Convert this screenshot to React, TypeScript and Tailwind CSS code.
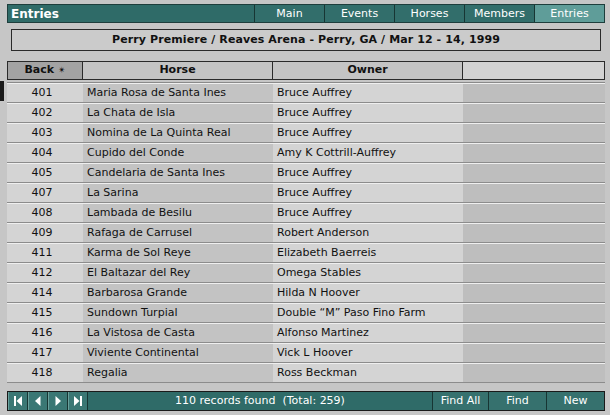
import React from 'react';

const rows: [string, string, string][] = [
  ['401', 'Maria Rosa de Santa Ines', 'Bruce Auffrey'],
  ['402', 'La Chata de Isla', 'Bruce Auffrey'],
  ['403', 'Nomina de La Quinta Real', 'Bruce Auffrey'],
  ['404', 'Cupido del Conde', 'Amy K Cottrill-Auffrey'],
  ['405', 'Candelaria de Santa Ines', 'Bruce Auffrey'],
  ['407', 'La Sarina', 'Bruce Auffrey'],
  ['408', 'Lambada de Besilu', 'Bruce Auffrey'],
  ['409', 'Rafaga de Carrusel', 'Robert Anderson'],
  ['411', 'Karma de Sol Reye', 'Elizabeth Baerreis'],
  ['412', 'El Baltazar del Rey', 'Omega Stables'],
  ['414', 'Barbarosa Grande', 'Hilda N Hoover'],
  ['415', 'Sundown Turpial', 'Double \u201CM\u201D Paso Fino Farm'],
  ['416', 'La Vistosa de Casta', 'Alfonso Martinez'],
  ['417', 'Viviente Continental', 'Vick L Hoover'],
  ['418', 'Regalia', 'Ross Beckman'],
];

const tabs = ['Main', 'Events', 'Horses', 'Members', 'Entries'];

const NavIcon = ({ kind }: { kind: 'first' | 'prev' | 'next' | 'last' }) => (
  <svg width="12" height="12" viewBox="0 0 12 12" fill="#fff">
    {kind === 'first' && (
      <>
        <rect x="2" y="1" width="2" height="10" />
        <polygon points="10,1 10,11 4.5,6" />
      </>
    )}
    {kind === 'prev' && <polygon points="8.5,1 8.5,11 3,6" />}
    {kind === 'next' && <polygon points="3.5,1 3.5,11 9,6" />}
    {kind === 'last' && (
      <>
        <polygon points="2,1 2,11 7.5,6" />
        <rect x="8" y="1" width="2" height="10" />
      </>
    )}
  </svg>
);

export default function App() {
  const font = { fontFamily: '"DejaVu Sans", Verdana, sans-serif' };
  return (
    <div
      className="w-[610px] h-[415px] bg-[#c6c6c6] overflow-hidden flex"
      style={{ fontFamily: '"Liberation Sans", Arial, sans-serif' }}
    >
      {/* left gutter with current record marker */}
      <div className="w-[7px] shrink-0 flex flex-col">
        <div className="h-[81px]" />
        <div className="h-[20px] w-[4px] bg-[#1a1a1a]" />
      </div>

      <div className="w-[598px] flex flex-col">
        {/* title bar + tabs */}
        <div className="mt-[4px] h-[19px] flex bg-[#2f6b68] border border-[#1e3e3c]">
          <div className="flex-1 flex items-center pl-[3px] text-white font-bold text-[12px]" style={font}>
            Entries
          </div>
          {tabs.map((t) => (
            <div
              key={t}
              className={`w-[70px] flex items-center justify-center pt-[1px] text-[11px] text-white border-l border-[#173533] ${
                t === 'Entries' ? 'bg-[#5f9d99]' : 'bg-[#326e6b]'
              }`}
              style={font}
            >
              {t}
            </div>
          ))}
        </div>

        {/* event banner */}
        <div
          className="mt-[6px] ml-[4px] mr-[4px] h-[22px] flex items-center justify-center bg-[#cbcbcb] border border-[#2a2a2a] font-bold text-[11px] tracking-[0.1px] text-[#111]"
          style={font}
        >
          Perry Premiere / Reaves Arena - Perry, GA / Mar 12 - 14, 1999
        </div>

        {/* column header */}
        <div
          className="mt-[10px] h-[19px] flex border border-[#2a2a2a] bg-[#cfcfcf] font-bold text-[11px] text-[#111]"
          style={font}
        >
          <div className="w-[75px] flex items-center justify-center bg-[#a3a3a3] border-r border-[#2a2a2a]">
            Back <span className="ml-[4px] text-[9px]">&#10036;</span>
          </div>
          <div className="w-[190px] flex items-center justify-center bg-[#c4c4c4] border-r border-[#2a2a2a]">
            Horse
          </div>
          <div className="w-[190px] flex items-center justify-center bg-[#c4c4c4] border-r border-[#2a2a2a]">
            Owner
          </div>
          <div className="flex-1 bg-[#d2d2d2]" />
        </div>

        {/* records */}
        <div className="mt-[2px] flex flex-col border-t border-[#8a8a8a]">
          {rows.map(([back, horse, owner]) => (
            <div
              key={back}
              className="h-[20px] flex text-[11px] text-[#111] border-t border-[#efefef] border-b border-b-[#8c8c8c]"
              style={font}
            >
              <div className="w-[76px] flex items-center justify-center bg-[#d4d4d4] pr-[6px] pt-[1px]">{back}</div>
              <div className="w-[190px] flex items-center pl-[4px] pt-[1px] bg-[#c3c3c3]">{horse}</div>
              <div className="w-[190px] flex items-center pl-[4px] pt-[1px] bg-[#d4d4d4]">{owner}</div>
              <div className="flex-1 bg-[#bebebe]" />
            </div>
          ))}
        </div>

        {/* footer bar */}
        <div className="mt-[8px] h-[20px] flex bg-[#2f6b68] border border-[#1a1a1a] text-white text-[11px]" style={font}>
          {(['first', 'prev', 'next', 'last'] as const).map((k) => (
            <div
              key={k}
              className="w-[20px] flex items-center justify-center bg-[#3a7774] border-r border-[#173533] border-l border-l-[#6aa09c]"
            >
              <NavIcon kind={k} />
            </div>
          ))}
          <div className="flex-1 flex items-center justify-center">110 records found&nbsp; (Total: 259)</div>
          {['Find All', 'Find', 'New'].map((b) => (
            <div
              key={b}
              className={`${b === 'Find All' ? 'w-[56px]' : 'w-[58px]'} flex items-center justify-center bg-[#36716e] border-l border-[#173533]`}
            >
              {b}
            </div>
          ))}
        </div>
      </div>
    </div>
  );
}
